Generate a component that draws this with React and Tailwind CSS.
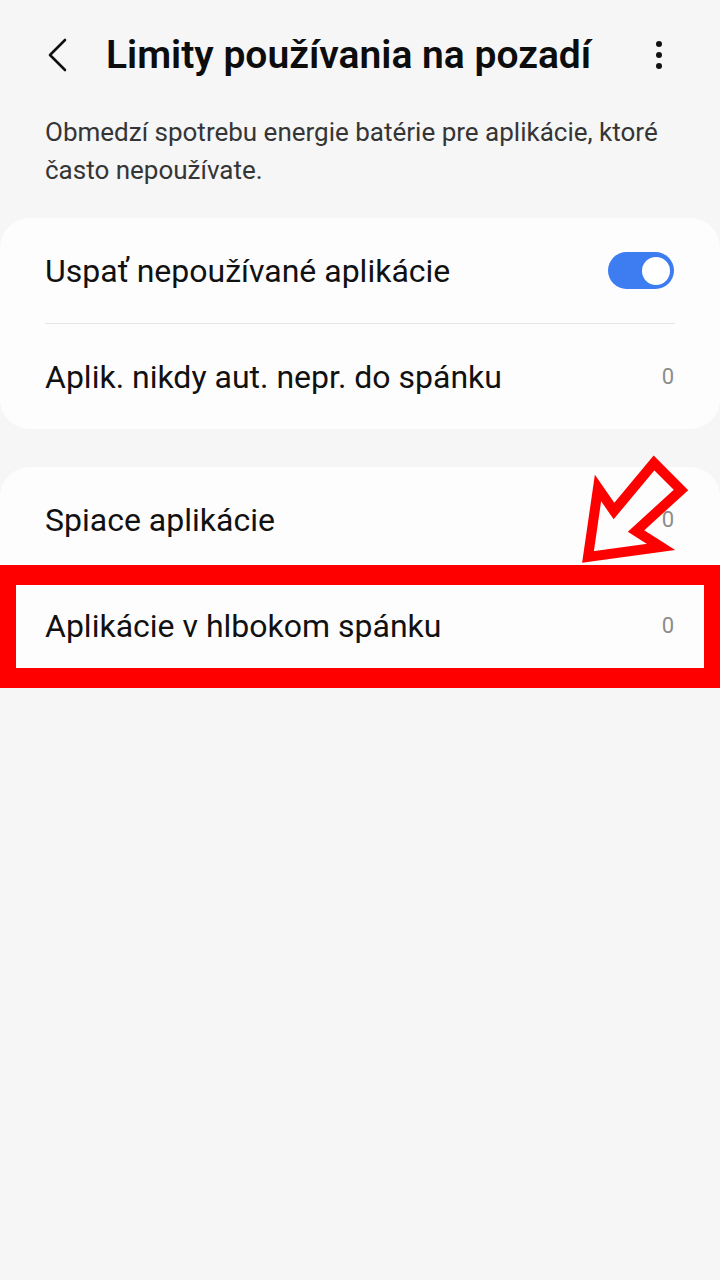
import React from "react";

function Row({ label, right }) {
  return (
    <div className="flex h-[105px] items-center justify-between pl-[45px] pr-[46px]">
      <span className="text-[32px] text-[#111111]">{label}</span>
      {right}
    </div>
  );
}

function Count() {
  return <span className="text-[22px] text-[#8c8c8c]">0</span>;
}

function Toggle() {
  return (
    <div className="flex h-[37px] w-[66px] items-center justify-end rounded-full bg-[#3d7cf1] pr-[2px]">
      <div className="h-[32px] w-[32px] rounded-full border-[2px] border-[#3d7cf1] bg-white" />
    </div>
  );
}

export default function App() {
  return (
    <div
      className="relative min-h-[1280px] w-[720px] bg-[#f6f6f6]"
      style={{ fontFamily: "Roboto, 'Noto Sans', sans-serif" }}
    >
      {/* App bar */}
      <div className="flex h-[110px] items-center pl-[44px] pr-[58px]">
        <svg width="28" height="34" viewBox="0 0 28 34" className="shrink-0">
          <path d="M21 2 L6 17 L21 32" fill="none" stroke="#111" strokeWidth="2.6" strokeLinecap="round" strokeLinejoin="round" />
        </svg>
        <h1 className="ml-[34px] flex-1 text-[39px] font-semibold text-[#0d0d0d]">
          Limity používania na pozadí
        </h1>
        <div className="flex flex-col items-center gap-[5px]">
          <span className="h-[6px] w-[6px] rounded-full bg-[#111]" />
          <span className="h-[6px] w-[6px] rounded-full bg-[#111]" />
          <span className="h-[6px] w-[6px] rounded-full bg-[#111]" />
        </div>
      </div>

      {/* Description */}
      <p className="mt-[3px] px-[45px] text-[26px] leading-[38px] text-[#353535]">
        Obmedzí spotrebu energie batérie pre aplikácie, ktoré často nepoužívate.
      </p>

      {/* First group */}
      <div className="mt-[29px] rounded-[30px] bg-[#fdfdfd]">
        <Row label="Uspať nepoužívané aplikácie" right={<Toggle />} />
        <div className="mx-[45px] h-px bg-[#e4e4e4]" />
        <Row label="Aplik. nikdy aut. nepr. do spánku" right={<Count />} />
      </div>

      {/* Second group */}
      <div className="mt-[38px] rounded-[30px] bg-[#fdfdfd]">
        <Row label="Spiace aplikácie" right={<Count />} />
        <div className="mx-[45px] h-px bg-[#e4e4e4]" />
        <Row label="Aplikácie v hlbokom spánku" right={<Count />} />
      </div>

      {/* Highlight frame */}
      <div className="pointer-events-none absolute left-0 top-[565px] h-[123px] w-[720px] border-x-[16px] border-y-[20px] border-[#ff0000]" />

      {/* Pointer arrow */}
      <svg
        className="pointer-events-none absolute left-0 top-0"
        width="720"
        height="600"
        viewBox="0 0 720 600"
      >
        <polygon
          points="588,557 598,488 614,511 654,463 681,490 636,531 661,547"
          fill="none"
          stroke="#ff0000"
          strokeWidth="10"
          strokeLinejoin="miter"
          strokeMiterlimit="6"
        />
      </svg>
    </div>
  );
}
